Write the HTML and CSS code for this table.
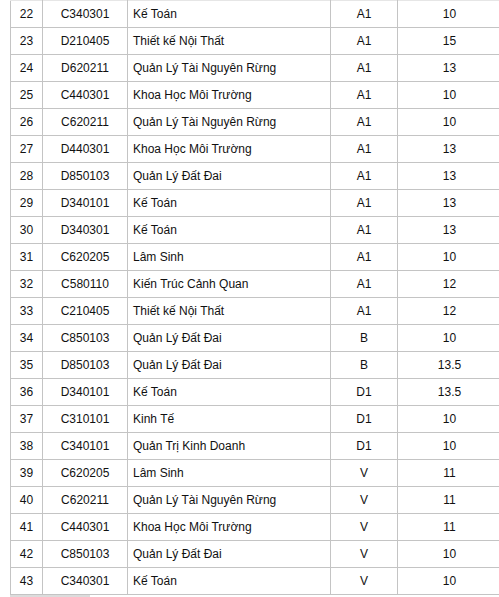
FILE: index.html
```html
<!DOCTYPE html>
<html lang="vi">
<head>
<meta charset="utf-8">
<title>Chỉ tiêu</title>
<link rel="stylesheet" href="styles.css">
</head>
<body>
<table class="grid">
<colgroup>
<col class="c-no"><col class="c-code"><col class="c-name"><col class="c-blk"><col class="c-score">
</colgroup>
<tbody>
<tr><td class="ctr">22</td><td class="ctr">C340301</td><td class="name">Kế Toán</td><td class="ctr">A1</td><td class="ctr">10</td></tr>
<tr><td class="ctr">23</td><td class="ctr">D210405</td><td class="name">Thiết kế Nội Thất</td><td class="ctr">A1</td><td class="ctr">15</td></tr>
<tr><td class="ctr">24</td><td class="ctr">D620211</td><td class="name">Quản Lý Tài Nguyên Rừng</td><td class="ctr">A1</td><td class="ctr">13</td></tr>
<tr><td class="ctr">25</td><td class="ctr">C440301</td><td class="name">Khoa Học Môi Trường</td><td class="ctr">A1</td><td class="ctr">10</td></tr>
<tr><td class="ctr">26</td><td class="ctr">C620211</td><td class="name">Quản Lý Tài Nguyên Rừng</td><td class="ctr">A1</td><td class="ctr">10</td></tr>
<tr><td class="ctr">27</td><td class="ctr">D440301</td><td class="name">Khoa Học Môi Trường</td><td class="ctr">A1</td><td class="ctr">13</td></tr>
<tr><td class="ctr">28</td><td class="ctr">D850103</td><td class="name">Quản Lý Đất Đai</td><td class="ctr">A1</td><td class="ctr">13</td></tr>
<tr><td class="ctr">29</td><td class="ctr">D340101</td><td class="name">Kế Toán</td><td class="ctr">A1</td><td class="ctr">13</td></tr>
<tr><td class="ctr">30</td><td class="ctr">D340301</td><td class="name">Kế Toán</td><td class="ctr">A1</td><td class="ctr">13</td></tr>
<tr><td class="ctr">31</td><td class="ctr">C620205</td><td class="name">Lâm Sinh</td><td class="ctr">A1</td><td class="ctr">10</td></tr>
<tr><td class="ctr">32</td><td class="ctr">C580110</td><td class="name">Kiến Trúc Cảnh Quan</td><td class="ctr">A1</td><td class="ctr">12</td></tr>
<tr><td class="ctr">33</td><td class="ctr">C210405</td><td class="name">Thiết kế Nội Thất</td><td class="ctr">A1</td><td class="ctr">12</td></tr>
<tr><td class="ctr">34</td><td class="ctr">C850103</td><td class="name">Quản Lý Đất Đai</td><td class="ctr">B</td><td class="ctr">10</td></tr>
<tr><td class="ctr">35</td><td class="ctr">D850103</td><td class="name">Quản Lý Đất Đai</td><td class="ctr">B</td><td class="ctr">13.5</td></tr>
<tr><td class="ctr">36</td><td class="ctr">D340101</td><td class="name">Kế Toán</td><td class="ctr">D1</td><td class="ctr">13.5</td></tr>
<tr><td class="ctr">37</td><td class="ctr">C310101</td><td class="name">Kinh Tế</td><td class="ctr">D1</td><td class="ctr">10</td></tr>
<tr><td class="ctr">38</td><td class="ctr">C340101</td><td class="name">Quản Trị Kinh Doanh</td><td class="ctr">D1</td><td class="ctr">10</td></tr>
<tr><td class="ctr">39</td><td class="ctr">C620205</td><td class="name">Lâm Sinh</td><td class="ctr">V</td><td class="ctr">11</td></tr>
<tr><td class="ctr">40</td><td class="ctr">C620211</td><td class="name">Quản Lý Tài Nguyên Rừng</td><td class="ctr">V</td><td class="ctr">11</td></tr>
<tr><td class="ctr">41</td><td class="ctr">C440301</td><td class="name">Khoa Học Môi Trường</td><td class="ctr">V</td><td class="ctr">11</td></tr>
<tr><td class="ctr">42</td><td class="ctr">C850103</td><td class="name">Quản Lý Đất Đai</td><td class="ctr">V</td><td class="ctr">10</td></tr>
<tr><td class="ctr">43</td><td class="ctr">C340301</td><td class="name">Kế Toán</td><td class="ctr">V</td><td class="ctr">10</td></tr>
</tbody>
</table>
<div class="scrollbar"></div>
</body>
</html>
```
FILE: styles.css
```css
html, body {
  margin: 0;
  padding: 0;
  background: #fff;
  overflow: hidden;
}
body {
  font-family: "Liberation Sans", Arial, sans-serif;
  font-size: 12px;
  color: #111;
}
.grid {
  border-collapse: collapse;
  table-layout: fixed;
  width: 492px;
  margin: 0 0 0 10px;
}
.c-no { width: 32px; }
.c-code { width: 85px; }
.c-name { width: 203px; }
.c-blk { width: 67px; }
.c-score { width: 104px; }
.grid tr:first-child td { border-top-color: #e6e6e6; }
.grid td {
  border: 1px solid #c4c4c4;
  height: 26px;
  padding: 0;
  line-height: 26px;
  white-space: nowrap;
  overflow: hidden;
}
.grid td.ctr { text-align: center; }
.grid td.name { text-align: left; padding-left: 5px; }
.scrollbar {
  margin: 0 0 0 10px;
  width: 80px;
  height: 2px;
  background: #dcdcdc;
}
```
